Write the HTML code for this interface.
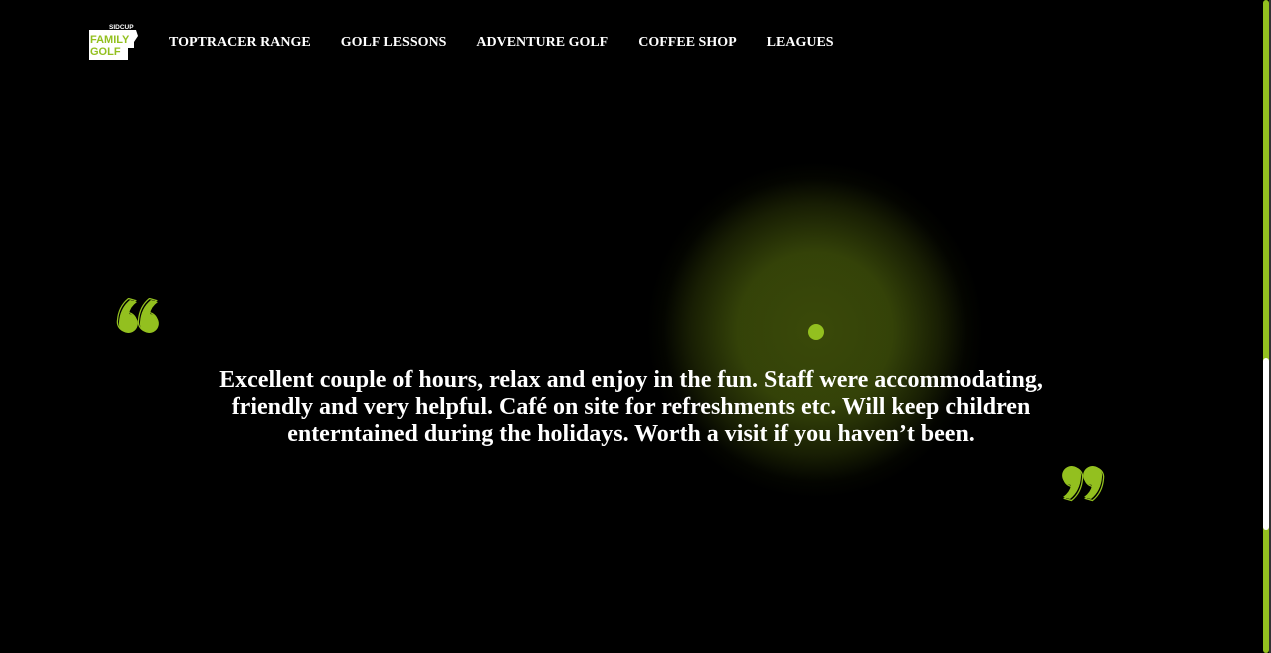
<!DOCTYPE html>
<html><head><style>
html,body{margin:0;padding:0;width:1271px;height:653px;overflow:hidden;background:#000;font-family:"Liberation Serif",serif}
.nav{position:absolute;top:35px;left:169px;color:#fff;font-weight:bold;font-size:14px;white-space:nowrap}
.nav span{margin-right:30px}
.glow{position:absolute;left:645px;top:160px;width:340px;height:340px;border-radius:50%;background:radial-gradient(circle,rgba(58,73,9,1) 0%,rgba(55,70,9,0.95) 32%,rgba(40,50,6,0.6) 52%,rgba(15,20,2,0.25) 63%,rgba(0,0,0,0) 70%)}
.dot{position:absolute;left:808px;top:324px;width:16px;height:16px;border-radius:50%;background:#93c01f}
.q{position:absolute;left:0;width:1262px;top:367px;text-align:center;color:#fff;font-weight:bold;font-size:24px;line-height:27px;white-space:nowrap}
.sb{position:absolute;left:1263px;top:0;width:6px;height:653px;background:#93c01f;border-radius:3px}
.th{position:absolute;left:1263px;top:358px;width:6px;height:172px;background:#fff;border-radius:3px}
.edge{position:absolute;left:1269px;top:0;width:2px;height:653px;background:#333}
</style></head><body>
<div class="glow"></div>
<div class="dot"></div>
<svg style="position:absolute;left:88px;top:22px" width="52" height="40">
<text x="21" y="7" fill="#fff" font-family="Liberation Sans" font-weight="bold" font-size="6.5">SIDCUP</text>
<path d="M1 8 H48 L50 14 L46 20 V26 H40 V38 H1 Z" fill="#fff"/>
<text x="2" y="21" fill="#93c01f" font-family="Liberation Sans" font-weight="bold" font-size="11">FAMILY</text>
<text x="2" y="33" fill="#93c01f" font-family="Liberation Sans" font-weight="bold" font-size="11">GOLF</text>
</svg>
<div class="nav"><span>TOPTRACER RANGE</span><span>GOLF LESSONS</span><span>ADVENTURE GOLF</span><span>COFFEE SHOP</span><span>LEAGUES</span></div>
<svg style="position:absolute;left:115px;top:298px" width="50" height="40">
<defs><path id="six" d="M13 2 Q3 10 2 24 A9.5 9.5 0 1 0 12 16 Q13 9 20 4 Z"/></defs>
<g fill="none" stroke="#93c01f" stroke-width="1.3" transform="translate(-1.5,-1.5)"><use href="#six" x="2"/><use href="#six" x="23"/></g>
<g fill="#93c01f"><use href="#six" x="2"/><use href="#six" x="23"/></g>
</svg>
<svg style="position:absolute;left:1057px;top:465px" width="50" height="40">
<defs><path id="nine" d="M13 2 Q3 10 2 24 A9.5 9.5 0 1 0 12 16 Q13 9 20 4 Z" transform="rotate(180 12 18)"/></defs>
<g fill="none" stroke="#93c01f" stroke-width="1.3" transform="translate(1.5,1.5)"><use href="#nine" x="2"/><use href="#nine" x="23"/></g>
<g fill="#93c01f"><use href="#nine" x="2"/><use href="#nine" x="23"/></g>
</svg>
<div class="q">Excellent couple of hours, relax and enjoy in the fun. Staff were accommodating,<br>friendly and very helpful. Café on site for refreshments etc. Will keep children<br>enterntained during the holidays. Worth a visit if you haven’t been.</div>
<div class="sb"></div><div class="th"></div><div class="edge"></div>
</body></html>
